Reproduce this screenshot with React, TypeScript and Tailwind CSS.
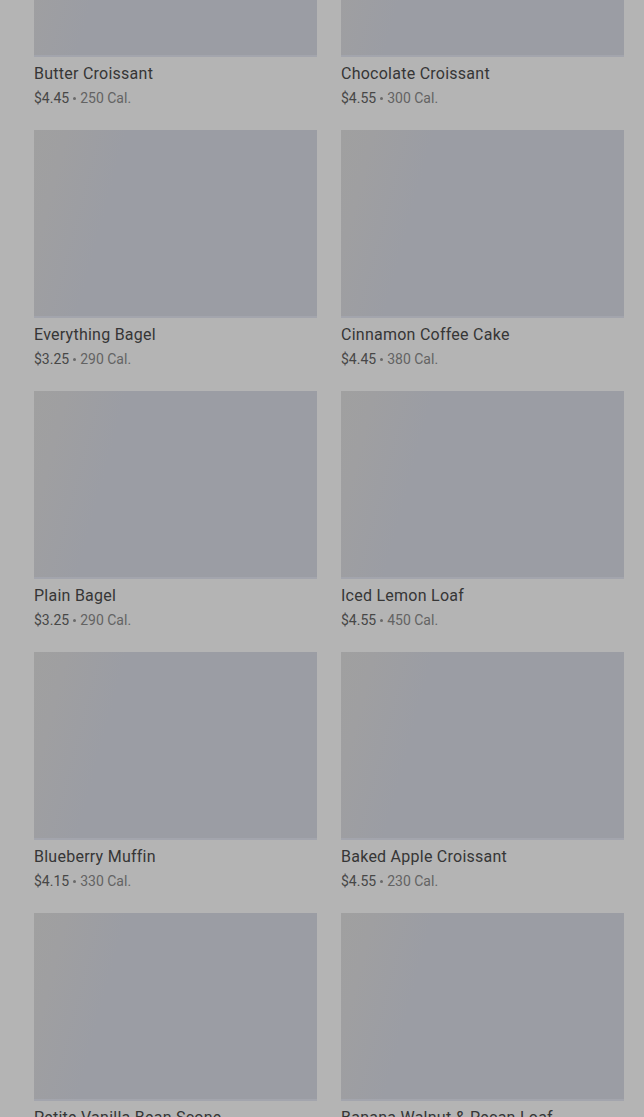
import React from 'react';

interface Producto {
  nome: string;
  preco: string;
  calorias: number;
}

const produtos: Producto[] = [
  { nome: 'Butter Croissant', preco: '$4.45', calorias: 250 },
  { nome: 'Chocolate Croissant', preco: '$4.55', calorias: 300 },
  { nome: 'Everything Bagel', preco: '$3.25', calorias: 290 },
  { nome: 'Cinnamon Coffee Cake', preco: '$4.45', calorias: 380 },
  { nome: 'Plain Bagel', preco: '$3.25', calorias: 290 },
  { nome: 'Iced Lemon Loaf', preco: '$4.55', calorias: 450 },
  { nome: 'Blueberry Muffin', preco: '$4.15', calorias: 330 },
  { nome: 'Baked Apple Croissant', preco: '$4.55', calorias: 230 },
  { nome: 'Petite Vanilla Bean Scone', preco: '$2.25', calorias: 120 },
  { nome: 'Banana Walnut & Pecan Loaf', preco: '$4.15', calorias: 410 },
];

function CardProduto({ produto }: { produto: Producto }) {
  return (
    <div className="flex flex-col">
      {/* placeholder da imagem (skeleton) */}
      <div className="h-[188px] w-full border-b-2 border-[#a3a5ad] bg-[linear-gradient(105deg,#a0a0a0_0%,#9f9fa1_10%,#9b9da4_28%,#9b9da4_100%)]" />
      <p className="mt-[7px] text-[16px] leading-[20px] tracking-[0.25px] text-[#363636]">{produto.nome}</p>
      <p className="mt-[4px] flex items-center text-[14px] leading-[20px] text-[#636363]">
        <span className="text-[#474747]">{produto.preco}</span>
        <span className="mx-[4px] inline-block h-[3px] w-[3px] rounded-full bg-[#6a6a6a]" />
        <span>{produto.calorias} Cal.</span>
      </p>
    </div>
  );
}

export default function App() {
  return (
    <div
      className="h-[1117px] overflow-hidden bg-[#b4b4b4]"
      style={{ fontFamily: 'Roboto, "Noto Sans", sans-serif' }}
    >
      <div className="mt-[-131px] grid grid-cols-2 gap-x-[24px] gap-y-[22px] pl-[34px] pr-[20px]">
        {produtos.map((p, i) => (
          <CardProduto key={i} produto={p} />
        ))}
      </div>
    </div>
  );
}
